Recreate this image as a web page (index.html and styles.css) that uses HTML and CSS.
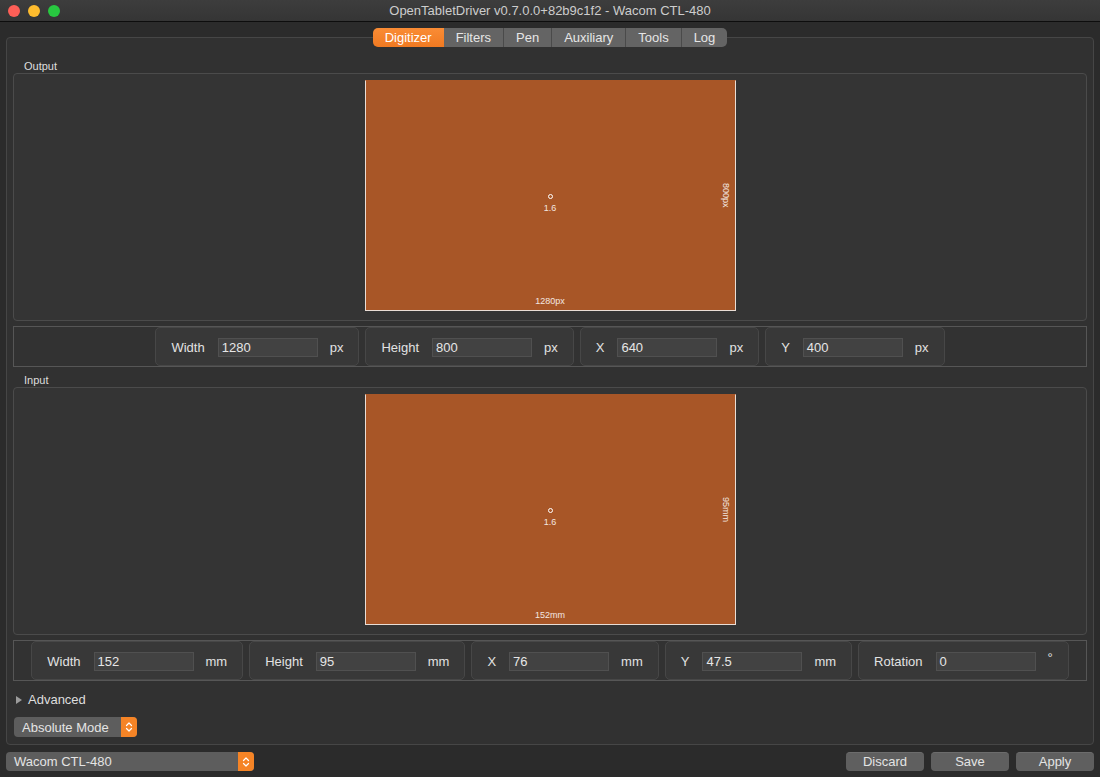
FILE: index.html
```html
<!DOCTYPE html>
<html>
<head>
<meta charset="utf-8">
<title>OpenTabletDriver</title>
<link rel="stylesheet" href="styles.css">
</head>
<body>
<div class="window">
  <div class="titlebar">
    <div class="lights">
      <span class="light red"></span>
      <span class="light yellow"></span>
      <span class="light green"></span>
    </div>
    <div class="title">OpenTabletDriver v0.7.0.0+82b9c1f2 - Wacom CTL-480</div>
  </div>

  <div class="content">
    <div class="tabs">
      <div class="tab active">Digitizer</div>
      <div class="tab">Filters</div>
      <div class="tab">Pen</div>
      <div class="tab">Auxiliary</div>
      <div class="tab">Tools</div>
      <div class="tab last">Log</div>
    </div>

    <div class="panel">
      <div class="group-label">Output</div>
      <div class="group">
        <div class="area">
          <div class="marker"></div>
          <div class="ratio">1.6</div>
          <div class="dim-bottom">1280px</div>
          <div class="dim-right">800px</div>
        </div>
      </div>

      <div class="fields">
        <div class="field"><span class="flabel">Width</span><span class="input">1280</span><span class="unit">px</span></div>
        <div class="field"><span class="flabel">Height</span><span class="input">800</span><span class="unit">px</span></div>
        <div class="field"><span class="flabel">X</span><span class="input">640</span><span class="unit">px</span></div>
        <div class="field"><span class="flabel">Y</span><span class="input">400</span><span class="unit">px</span></div>
      </div>

      <div class="group-label spaced">Input</div>
      <div class="group">
        <div class="area">
          <div class="marker"></div>
          <div class="ratio">1.6</div>
          <div class="dim-bottom">152mm</div>
          <div class="dim-right">95mm</div>
        </div>
      </div>

      <div class="fields">
        <div class="field"><span class="flabel">Width</span><span class="input">152</span><span class="unit">mm</span></div>
        <div class="field"><span class="flabel">Height</span><span class="input">95</span><span class="unit">mm</span></div>
        <div class="field"><span class="flabel">X</span><span class="input">76</span><span class="unit">mm</span></div>
        <div class="field"><span class="flabel">Y</span><span class="input">47.5</span><span class="unit">mm</span></div>
        <div class="field"><span class="flabel">Rotation</span><span class="input">0</span><span class="unit deg">°</span></div>
      </div>

      <div class="advanced">
        <span class="tri"></span>
        <span>Advanced</span>
      </div>

      <div class="select mode">
        <span class="select-text">Absolute Mode</span>
        <span class="select-btn">
          <svg width="8" height="12" viewBox="0 0 8 12"><path d="M1.5 4.5 L4 2 L6.5 4.5 M1.5 7.5 L4 10 L6.5 7.5" fill="none" stroke="#fff" stroke-width="1.2" stroke-linecap="round" stroke-linejoin="round"/></svg>
        </span>
      </div>
    </div>

    <div class="bottombar">
      <div class="select tablet">
        <span class="select-text">Wacom CTL-480</span>
        <span class="select-btn">
          <svg width="8" height="12" viewBox="0 0 8 12"><path d="M1.5 4.5 L4 2 L6.5 4.5 M1.5 7.5 L4 10 L6.5 7.5" fill="none" stroke="#fff" stroke-width="1.2" stroke-linecap="round" stroke-linejoin="round"/></svg>
        </span>
      </div>
      <div class="buttons">
        <div class="button">Discard</div>
        <div class="button">Save</div>
        <div class="button">Apply</div>
      </div>
    </div>
  </div>
</div>
</body>
</html>
```

FILE: styles.css
```css
html, body {
  margin: 0;
  padding: 0;
  background: #2b2b2b;
}

body {
  font-family: "Liberation Sans", Arial, sans-serif;
  font-size: 13px;
  color: #dcdcdc;
}

.window {
  width: 1100px;
  height: 777px;
  background: #2b2b2b;
  border-radius: 0 0 9px 9px;
  overflow: hidden;
  box-sizing: border-box;
}

.titlebar {
  height: 21px;
  border-bottom: 1px solid #0d0d0d;
  background: linear-gradient(#3d3d3d, #353535);
  position: relative;
  display: flex;
  align-items: center;
  justify-content: center;
}

.lights {
  position: absolute;
  left: 8px;
  top: 5px;
  display: flex;
  gap: 8px;
}

.light {
  width: 12px;
  height: 12px;
  border-radius: 50%;
  display: block;
}
.red { background: #fe5f57; }
.yellow { background: #febc2e; }
.green { background: #28c840; }

.title {
  color: #cdcdcd;
  font-size: 13px;
  line-height: 21px;
}

.content {
  padding: 0 6px;
}

.tabs {
  display: flex;
  justify-content: center;
  margin-top: 6px;
  margin-bottom: -10px;
  position: relative;
  z-index: 2;
}

.tab {
  height: 19px;
  line-height: 19px;
  padding: 0 12px;
  background: #646464;
  color: #e6e6e6;
  border-right: 1px solid #4a4a4a;
  font-size: 13px;
}
.tab:first-child {
  border-radius: 5px 0 0 5px;
}
.tab.last {
  border-right: none;
  border-radius: 0 5px 5px 0;
}
.tab.active {
  background: linear-gradient(#fa8c35, #f07a22);
  color: #fff;
  border-right: none;
}

.panel {
  border: 1px solid #464646;
  border-radius: 4px;
  background: #313131;
  padding: 21px 6px 7px;
}

.group-label {
  font-size: 11px;
  line-height: 14px;
  height: 14px;
  padding-left: 11px;
  color: #dedede;
}
.group-label.spaced {
  margin-top: 6px;
}

.group {
  height: 248px;
  box-sizing: border-box;
  border: 1px solid #4b4b4b;
  border-radius: 4px;
  background: #343434;
  display: flex;
  justify-content: center;
  padding-top: 6px;
}

.area {
  width: 371px;
  height: 231px;
  box-sizing: border-box;
  background: #a85627;
  border: 1px solid #e9ddd5;
  border-top-color: #a85627;
  position: relative;
  font-size: 9px;
  color: #f3e7e0;
}

.marker {
  position: absolute;
  left: 182px;
  top: 113px;
  width: 3px;
  height: 3px;
  border: 1px solid #ffffff;
  border-radius: 50%;
}

.ratio {
  position: absolute;
  left: 0;
  right: 0;
  top: 122px;
  text-align: center;
  line-height: 10px;
}

.dim-bottom {
  position: absolute;
  left: 0;
  right: 0;
  bottom: 4px;
  text-align: center;
  line-height: 10px;
}

.dim-right {
  position: absolute;
  right: 4px;
  top: 0;
  bottom: 0;
  margin: auto 0;
  height: 40px;
  width: 10px;
  writing-mode: vertical-rl;
  text-align: center;
  line-height: 10px;
}

.fields {
  margin-top: 5px;
  height: 41px;
  box-sizing: border-box;
  border: 1px solid #565656;
  background: #323232;
  display: flex;
  justify-content: center;
  gap: 6px;
}

.field {
  height: 39px;
  box-sizing: border-box;
  border: 1px solid #474747;
  border-radius: 5px;
  background: #383838;
  display: flex;
  align-items: center;
  padding: 2px 15px 0;
  color: #e2e2e2;
}

.flabel {
  margin-right: 13px;
}

.input {
  width: 100px;
  height: 19px;
  box-sizing: border-box;
  background: #424242;
  border: 1px solid #505050;
  line-height: 17px;
  padding-left: 3px;
  margin-right: 12px;
  color: #e6e6e6;
}

.unit.deg {
  align-self: flex-start;
  margin-top: 6px;
}

.advanced {
  margin-top: 11px;
  height: 16px;
  line-height: 16px;
  display: flex;
  align-items: center;
  padding-left: 3px;
  color: #dedede;
}

.tri {
  width: 0;
  height: 0;
  border-left: 6px solid #9b9b9b;
  border-top: 4px solid transparent;
  border-bottom: 4px solid transparent;
  margin-right: 6px;
}

.select {
  height: 20px;
  box-sizing: border-box;
  background: #5d5d5d;
  border-radius: 4px;
  display: flex;
  align-items: center;
  justify-content: space-between;
  overflow: hidden;
  color: #e4e4e4;
}

.select.mode {
  width: 123px;
  margin-top: 9px;
  margin-left: 1px;
}

.select-text {
  padding-left: 8px;
}

.select-btn {
  width: 16px;
  height: 100%;
  background: #f58426;
  display: flex;
  align-items: center;
  justify-content: center;
}

.bottombar {
  margin-top: 7px;
  display: flex;
  justify-content: space-between;
  align-items: center;
}

.select.tablet {
  width: 248px;
  height: 19px;
}

.buttons {
  display: flex;
  gap: 7px;
}

.button {
  width: 78px;
  height: 19px;
  box-sizing: border-box;
  background: #5f5f5f;
  border-top: 1px solid #6c6c6c;
  border-radius: 4px;
  text-align: center;
  line-height: 17px;
  color: #e4e4e4;
}
```
